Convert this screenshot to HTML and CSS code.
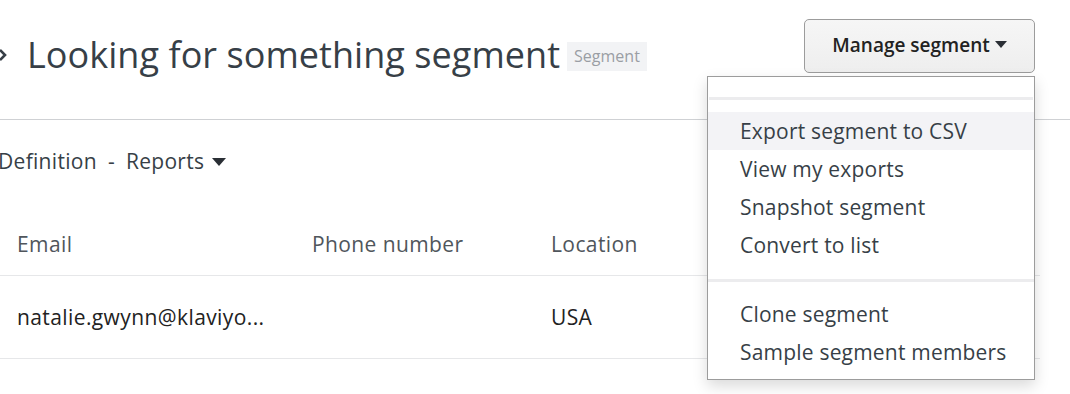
FILE: index.html
```html
<!DOCTYPE html>
<html lang="en">

<head>
    <meta charset="UTF-8">
    <meta name="viewport" content="width=device-width, initial-scale=1.0">
    <title>Looking for something segment</title>
    <link rel="stylesheet" href="styles.css">
</head>

<body>
    <div class="page">
        <div class="header">
            <div class="titleRow">
                <svg class="back" width="14" height="14" viewBox="0 0 14 14">
                    <path d="M2 2 L7 7 L2 12" fill="none" stroke="#373f47" stroke-width="2.6" />
                </svg>
                <h1>Looking for something segment</h1>
                <span class="badge">Segment</span>
            </div>
            <div class="manage">
                <button type="button">Manage segment <span class="caret"></span></button>
                <div class="menu">
                    <div class="menuGroup menuTop"></div>
                    <ul class="menuGroup">
                        <li class="active">Export segment to CSV</li>
                        <li>View my exports</li>
                        <li>Snapshot segment</li>
                        <li>Convert to list</li>
                    </ul>
                    <ul class="menuGroup">
                        <li>Clone segment</li>
                        <li>Sample segment members</li>
                    </ul>
                </div>
            </div>
        </div>

        <div class="tabs">
            <span>Definition</span>
            <span class="dot">-</span>
            <span>Reports <span class="caret"></span></span>
        </div>

        <table class="members">
            <thead>
                <tr>
                    <th class="colEmail">Email</th>
                    <th class="colPhone">Phone number</th>
                    <th>Location</th>
                </tr>
            </thead>
            <tbody>
                <tr>
                    <td class="email">natalie.gwynn@klaviyo...</td>
                    <td></td>
                    <td>USA</td>
                </tr>
            </tbody>
        </table>
    </div>
</body>

</html>
```

FILE: styles.css
```css
* {
    margin: 0;
    padding: 0;
    box-sizing: border-box;
    font-family: "Open Sans", Lato, sans-serif;
}

body {
    background: #fff;
    color: #373f47;
    overflow: hidden;
}

.page {
    width: 1070px;
    min-height: 394px;
}

.header {
    height: 120px;
    border-bottom: 1px solid #cfd1d4;
    display: flex;
    justify-content: space-between;
    align-items: flex-start;
    padding-right: 35px;
}

.titleRow {
    display: flex;
    align-items: center;
    margin-top: 30px;
    margin-left: -2px;
}

.back {
    margin-right: 15px;
}

h1 {
    font-size: 36px;
    font-weight: 400;
    color: #373f47;
    letter-spacing: 0.05px;
}

.badge {
    margin-left: 7px;
    margin-top: 4px;
    background: #f2f3f5;
    color: #9a9ea4;
    font-size: 16px;
    line-height: 19px;
    padding: 5px 7px;
}

.manage {
    position: relative;
    margin-top: 19px;
}

.manage button {
    width: 231px;
    height: 54px;
    border: 1px solid #9c9c9c;
    border-radius: 5px;
    background: linear-gradient(#f6f6f6, #eeeeee);
    font-size: 19px;
    font-weight: 600;
    color: #222;
    padding-bottom: 3px;
}

.caret {
    display: inline-block;
    width: 0;
    height: 0;
    border-left: 6px solid transparent;
    border-right: 6px solid transparent;
    border-top: 7px solid #2a2f35;
    vertical-align: middle;
    margin-left: 0;
    margin-top: -3px;
}

.menu {
    position: absolute;
    top: 57px;
    right: 0;
    width: 328px;
    background: #fff;
    border: 1px solid #9c9c9c;
    box-shadow: 0 6px 14px rgba(0, 0, 0, 0.15);
    z-index: 2;
}

.menuGroup {
    list-style: none;
    border-bottom: 3px solid #ececee;
    padding: 12px 0 15px;
}

.menuGroup:last-child {
    border-bottom: none;
    padding-top: 13px;
    padding-bottom: 8px;
}

.menuTop {
    height: 23px;
    padding: 0;
    margin: 0 1px;
}

.menuGroup li {
    font-size: 21px;
    color: #373f47;
    padding: 0 28px 0 32px;
    height: 38px;
    line-height: 38px;
    letter-spacing: 0.2px;
    white-space: nowrap;
}

.menuGroup li.active {
    background: #f3f3f6;
}

.tabs {
    display: flex;
    align-items: center;
    gap: 10px;
    font-size: 21px;
    margin-left: -2px;
    margin-top: 27px;
    height: 28px;
    letter-spacing: 0.3px;
}

.tabs .dot {
    margin: 0 1px;
}

.tabs .caret {
    border-left-width: 7px;
    border-right-width: 7px;
    border-top-width: 8px;
    margin-left: 2px;
    margin-top: -2px;
}

.members {
    border-collapse: collapse;
    width: 1040px;
    margin-top: 38px;
}

.members th,
.members td {
    text-align: left;
    padding: 0 17px;
    border-bottom: 1px solid #e6e7e9;
    letter-spacing: 0.4px;
    white-space: nowrap;
}

.members th {
    font-size: 21px;
    font-weight: 400;
    color: #50565c;
    height: 62px;
    vertical-align: middle;
}

.members td {
    font-size: 21px;
    color: #222;
    height: 83px;
}

.colEmail {
    width: 295px;
}

.colPhone {
    width: 239px;
}
```
